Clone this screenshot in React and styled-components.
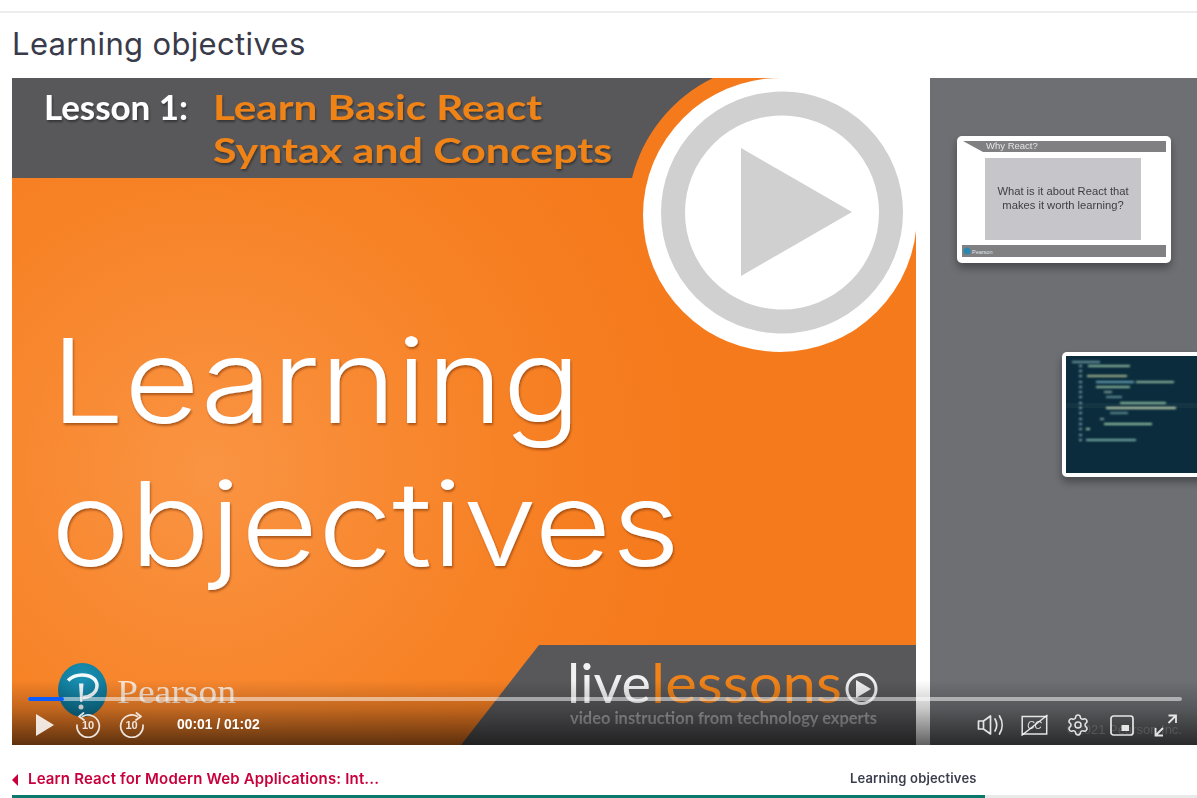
import React from "react";
import styled, { createGlobalStyle } from "styled-components";
import { Settings } from "lucide-react";

const Global = createGlobalStyle`
  html, body { margin: 0; padding: 0; background: #fff; }
  body { overflow: hidden; font-family: "Inter", "Liberation Sans", sans-serif; }
`;

const Page = styled.div`
  width: 1197px;
  height: 798px;
  display: flex;
  flex-direction: column;
  overflow: hidden;
  background: #fff;
`;

const TopRule = styled.div`
  height: 2px;
  margin-top: 11px;
  background: #ececee;
  flex: none;
`;

const Title = styled.h1`
  margin: 0;
  height: 65px;
  padding-left: 12px;
  display: flex;
  align-items: center;
  box-sizing: border-box;
  padding-bottom: 4px;
  font: 400 31px/1 "Inter", "Noto Sans", sans-serif;
  letter-spacing: 0.35px;
  color: #393b4a;
  flex: none;
`;

const Video = styled.div`
  position: relative;
  margin-left: 12px;
  width: 1185px;
  height: 667px;
  flex: none;
  overflow: hidden;
  background: #6e6f73;
`;

const SlideArt = styled.svg`
  display: block;
  width: 1185px;
  height: 667px;
  filter: blur(0.45px);
`;

const Controls = styled.div`
  position: absolute;
  left: 0;
  right: 0;
  bottom: 0;
  height: 48px;
  display: flex;
  flex-direction: column;
`;

const Track = styled.div`
  position: relative;
  height: 4px;
  margin: 0 15px 0 16px;
  border-radius: 2px;
  background: rgba(255, 255, 255, 0.5);
  flex: none;
`;

const Played = styled.div`
  height: 4px;
  border-radius: 2px;
  background: #0a5cff;
`;

const ControlRow = styled.div`
  flex: 1;
  display: flex;
  align-items: center;
  padding: 4px 19px 0 24px;
  color: rgba(255, 255, 255, 0.86);
`;

const LeftGroup = styled.div`
  display: flex;
  align-items: center;
`;

const RightGroup = styled.div`
  margin-left: auto;
  display: flex;
  align-items: center;
`;

const IconSlot = styled.span`
  display: flex;
  align-items: center;
  justify-content: center;
  flex: none;
  margin-left: ${(p) => p.$gap || 0}px;
  width: ${(p) => p.$w}px;
  height: 24px;
`;

const Time = styled.span`
  margin-left: 32px;
  font: 700 13.9px/1 "Liberation Sans", Arial, sans-serif;
  color: #fff;
  white-space: nowrap;
`;

const Watermark = styled.span`
  position: absolute;
  right: 15px;
  bottom: 9px;
  font: 400 13px/1 "Liberation Sans", Arial, sans-serif;
  color: rgba(255, 255, 255, 0.14);
  white-space: nowrap;
`;

const NavRow = styled.div`
  flex: 1;
  position: relative;
  display: flex;
  align-items: center;
  padding-left: 12px;
  padding-top: 16px;
`;

const BackLink = styled.a`
  display: flex;
  align-items: center;
  gap: 10px;
  width: 365px;
  font: 600 15px/1 "Inter", "Lato", sans-serif;
  letter-spacing: 0.16px;
  color: #c8003c;
  text-decoration: none;
  white-space: nowrap;
`;

const BackArrow = styled.span`
  width: 0;
  height: 0;
  margin-top: 3px;
  border-style: solid;
  border-width: 6px 6px 6px 0;
  border-color: transparent #c8003c transparent transparent;
`;

const CurrentLesson = styled.span`
  margin-left: 473px;
  font: 600 13px/1 "Inter", "Lato", sans-serif;
  letter-spacing: 0.16px;
  color: #3b3f4d;
  white-space: nowrap;
`;

const CourseProgress = styled.div`
  height: 3px;
  margin-left: 12px;
  background: #e9e9e9;
  flex: none;
`;

const CourseFill = styled.div`
  height: 3px;
  background: #0b7a6c;
`;

const codeLines = [
  [1072, 361, 28, "#6f949c", 1], [1088, 365, 42, "#8fb8a0", 2], [1087, 375, 40, "#a8b890", 3],
  [1096, 381, 38, "#6aa4b9", 4], [1136, 381, 38, "#8fb8a0", 5], [1096, 386, 34, "#8fb8a0", 6],
  [1104, 391, 8, "#7f9898", 7], [1106, 396, 16, "#5f8a92", 8], [1120, 402, 46, "#8fc0a0", 9],
  [1106, 407, 70, "#c7d8b0", 10], [1110, 412, 18, "#5f8a92", 11], [1100, 418, 4, "#7f9898", 12],
  [1104, 423, 48, "#9ac8a8", 13], [1086, 428, 4, "#9ac8a8", 14], [1086, 439, 50, "#7fb0a8", 15],
];

const lineNumbers = [365, 370, 375, 381, 386, 391, 396, 402, 407, 412, 418, 423, 428, 434, 439];

function Slide() {
  return (
    <SlideArt viewBox="12 78 1185 667">
      <defs>
        <radialGradient id="glow" gradientUnits="userSpaceOnUse" cx="210" cy="470" r="480">
          <stop offset="0" stopColor="#fa9443" />
          <stop offset="0.6" stopColor="#f78226" />
          <stop offset="1" stopColor="#f57a1c" />
        </radialGradient>
        <linearGradient id="shade" x1="0" x2="0" y1="0" y2="1">
          <stop offset="0" stopColor="#000" stopOpacity="0" />
          <stop offset="0.45" stopColor="#000" stopOpacity="0.22" />
          <stop offset="1" stopColor="#000" stopOpacity="0.62" />
        </linearGradient>
        <radialGradient id="logoBlue" cx="0.5" cy="0.3" r="0.8">
          <stop offset="0" stopColor="#1a93b5" />
          <stop offset="1" stopColor="#0a6c8c" />
        </radialGradient>
        <filter id="shadow" x="-10%" y="-10%" width="120%" height="125%">
          <feDropShadow dx="1" dy="2" stdDeviation="1.2" floodColor="#000" floodOpacity="0.4" />
        </filter>
        <filter id="softShadow" x="-10%" y="-10%" width="120%" height="125%">
          <feDropShadow dx="1" dy="2" stdDeviation="1" floodColor="#6a2c00" floodOpacity="0.55" />
        </filter>
        <filter id="cardShadow" x="-10%" y="-10%" width="120%" height="130%">
          <feDropShadow dx="0" dy="5" stdDeviation="4" floodColor="#000" floodOpacity="0.35" />
        </filter>
        <filter id="blur1"><feGaussianBlur stdDeviation="1" /></filter>
        <filter id="blur2"><feGaussianBlur stdDeviation="0.35" /></filter>
      </defs>

      <rect x="12" y="78" width="904" height="667" fill="url(#glow)" />
      <rect x="930" y="78" width="267" height="667" fill="#6e6f73" />
      <rect x="916" y="78" width="14" height="667" fill="#fff" />
      <rect x="780" y="78" width="136" height="137" fill="#fff" />
      <path d="M12 78H713A152.500 152.500 0 0 0 632 178H12Z" fill="#58585b" />
      <circle cx="780" cy="215" r="137" fill="#fff" />
      <circle cx="782" cy="212.500" r="109" fill="none" stroke="#d0d0d0" strokeWidth="24" />
      <path d="M741 148L852 212L741 276Z" fill="#d0d0d0" />

      <g filter="url(#shadow)" fontFamily="Lato, 'Noto Sans', sans-serif" fontWeight="700" fontSize="35">
        <text x="44" y="120" fill="#fff" textLength="144" lengthAdjust="spacingAndGlyphs">Lesson 1:</text>
        <text x="213" y="120" fill="#f08319" textLength="329" lengthAdjust="spacingAndGlyphs">Learn Basic React</text>
        <text x="213" y="163" fill="#f08319" textLength="399" lengthAdjust="spacingAndGlyphs">Syntax and Concepts</text>
      </g>

      <g filter="url(#softShadow)" fill="#fff" fontFamily="Inter, Lato, sans-serif" fontWeight="300" fontSize="117" style={{ fontVariantLigatures: "none" }}>
        <text x="51" y="423" textLength="530" lengthAdjust="spacingAndGlyphs">Learning</text>
        <text x="51" y="566" textLength="629" lengthAdjust="spacingAndGlyphs">objectives</text>
      </g>

      <path d="M539 645H916V745H461Z" fill="#58585b" />

      <ellipse cx="82.500" cy="690" rx="24.500" ry="27" fill="url(#logoBlue)" />
      <path d="M68 680.500C72 676.500 77 675 82 675C91 675 97 679.500 97 685.500C97 692.500 90 697.500 82.500 697.500" fill="none" stroke="#f4fafc" strokeWidth="3.500" />
      <path d="M79 683.500H83.500L82.300 702H80.200Z" fill="#f4fafc" />
      <circle cx="81" cy="707" r="2.500" fill="#f4fafc" />
      <text x="117" y="703" fontFamily="'Liberation Serif', serif" fontSize="33" fill="#fbe6d4" textLength="119" lengthAdjust="spacingAndGlyphs">Pearson</text>

      <g fontFamily="Lato, 'Open Sans', sans-serif" fontWeight="400" fontSize="55">
        <text x="567" y="703" fill="#f2f2f2" textLength="84" lengthAdjust="spacingAndGlyphs">live</text>
        <text x="651" y="703" fill="#f08319" textLength="191" lengthAdjust="spacingAndGlyphs">lessons</text>
      </g>
      <circle cx="861.500" cy="689" r="14.500" fill="none" stroke="#f0f0f0" strokeWidth="3" />
      <path d="M856 680L871 689L856 698Z" fill="#f0f0f0" />
      <text x="570" y="724" fontFamily="Lato, 'Noto Sans', sans-serif" fontWeight="700" fontSize="17" fill="#a9a9ab" textLength="307" lengthAdjust="spacingAndGlyphs">video instruction from technology experts</text>

      <rect x="957" y="136" width="214" height="127" rx="5" fill="#fff" filter="url(#cardShadow)" />
      <path d="M963 141H1166V152H983Z" fill="#808083" />
      <text x="986" y="149" fontFamily="'Liberation Sans', sans-serif" fontSize="9.500" fill="#e4e4e4">Why React?</text>
      <rect x="985" y="158" width="156" height="82" fill="#c6c5c9" />
      <g fontFamily="'Liberation Sans', sans-serif" fontSize="11.200" fill="#3e3e41" textAnchor="middle" filter="url(#blur2)">
        <text x="1063" y="195">What is it about React that</text>
        <text x="1063" y="209">makes it worth learning?</text>
      </g>
      <rect x="962" y="245" width="204" height="12" fill="#808083" />
      <circle cx="967" cy="251" r="3.500" fill="#2a87b0" />
      <text x="972" y="254" fontFamily="'Liberation Sans', sans-serif" fontSize="5.500" fill="#dfe3e6">Pearson</text>

      <rect x="1062" y="352" width="150" height="125" rx="5" fill="#fff" filter="url(#cardShadow)" />
      <rect x="1066" y="356" width="131" height="117" fill="#0a2c3c" />
      <g filter="url(#blur1)">
        {lineNumbers.map((y) => (
          <rect key={y} x="1079" y={y} width="3" height="2" fill="#7fa0a8" />
        ))}
        {codeLines.map(([x, y, w, c, k]) => (
          <rect key={k} x={x} y={y} width={w} height="2" fill={c} />
        ))}
      </g>
      <rect x="1066" y="403" width="131" height="5" fill="#fff" opacity="0.04" />

      <rect x="12" y="680" width="1185" height="65" fill="url(#shade)" />
    </SlideArt>
  );
}

const SkipBack = () => (
  <svg width="26" height="26" viewBox="0 0 26 26" fill="none">
    <path d="M7.500 4.500A11.200 11.200 0 1 1 2 13" stroke="currentColor" strokeWidth="1.700" strokeLinecap="round" />
    <path d="M8.500 1L4 4.500L9 8" stroke="currentColor" strokeWidth="1.700" strokeLinecap="round" strokeLinejoin="round" />
    <text x="13" y="17" textAnchor="middle" fontFamily="'Liberation Sans', sans-serif" fontWeight="700" fontSize="11" fill="currentColor">10</text>
  </svg>
);

const SkipForward = () => (
  <svg width="26" height="26" viewBox="0 0 26 26" fill="none">
    <path d="M18.500 4.500A11.200 11.200 0 1 0 24 13" stroke="currentColor" strokeWidth="1.700" strokeLinecap="round" />
    <path d="M17.500 1L22 4.500L17 8" stroke="currentColor" strokeWidth="1.700" strokeLinecap="round" strokeLinejoin="round" />
    <text x="12.500" y="17" textAnchor="middle" fontFamily="'Liberation Sans', sans-serif" fontWeight="700" fontSize="11" fill="currentColor">10</text>
  </svg>
);

const PlayIcon = () => (
  <svg width="18" height="22" viewBox="0 0 18 22"><path d="M0 0L18 11L0 22Z" fill="currentColor" /></svg>
);

const Speaker = () => (
  <svg width="28" height="22" viewBox="0 0 28 22" fill="none" stroke="currentColor" strokeWidth="1.700" strokeLinejoin="round" strokeLinecap="round">
    <path d="M1.500 7H6.500V15H1.500ZM6.500 7L13.500 2V20L6.500 15" />
    <path d="M18 5C20 8.500 20 13.500 18 17" />
    <path d="M22.500 2C26 7.500 26 14.500 22.500 20" />
  </svg>
);

const Captions = () => (
  <svg width="27" height="22" viewBox="0 0 27 22" fill="none" stroke="currentColor">
    <rect x="1.200" y="2.500" width="24.500" height="17.500" strokeWidth="1.500" />
    <path d="M0.500 21.500L26.500 1" strokeWidth="1.500" />
    <text x="13.500" y="15" textAnchor="middle" fontFamily="'Liberation Sans', sans-serif" fontSize="10" fontStyle="italic" fill="currentColor" stroke="none">CC</text>
  </svg>
);

const Pip = () => (
  <svg width="24" height="21" viewBox="0 0 24 21" fill="none">
    <rect x="1" y="1" width="22" height="19" rx="2.500" stroke="currentColor" strokeWidth="1.700" />
    <rect x="11.500" y="10" width="7.500" height="6" fill="currentColor" />
  </svg>
);

const Fullscreen = () => (
  <svg width="24" height="23" viewBox="0 0 24 23" fill="none" stroke="currentColor" strokeWidth="1.800">
    <path d="M14.500 1.500H22V9M22 1.500L14.500 9" />
    <path d="M1.500 14V21.500H9M1.500 21.500L9 14" />
  </svg>
);

export default function App() {
  return (
    <Page>
      <Global />
      <TopRule />
      <Title>Learning objectives</Title>
      <Video>
        <Slide />
        <Watermark>©2021 Pearson Inc.</Watermark>
        <Controls>
          <Track>
            <Played style={{ width: `${(36 / 1154) * 100}%` }} />
          </Track>
          <ControlRow>
            <LeftGroup>
              <IconSlot $w={18}><PlayIcon /></IconSlot>
              <IconSlot $w={26} $gap={21}><SkipBack /></IconSlot>
              <IconSlot $w={26} $gap={18}><SkipForward /></IconSlot>
              <Time>00:01 / 01:02</Time>
            </LeftGroup>
            <RightGroup>
              <IconSlot $w={28}><Speaker /></IconSlot>
              <IconSlot $w={27} $gap={16}><Captions /></IconSlot>
              <IconSlot $w={24} $gap={18}><Settings size={24} strokeWidth={1.5} /></IconSlot>
              <IconSlot $w={24} $gap={20}><Pip /></IconSlot>
              <IconSlot $w={24} $gap={20}><Fullscreen /></IconSlot>
            </RightGroup>
          </ControlRow>
        </Controls>
      </Video>
      <NavRow>
        <BackLink href="#">
          <BackArrow />
          Learn React for Modern Web Applications: Int...
        </BackLink>
        <CurrentLesson>Learning objectives</CurrentLesson>
      </NavRow>
      <CourseProgress>
        <CourseFill style={{ width: `${(973 / 1185) * 100}%` }} />
      </CourseProgress>
    </Page>
  );
}
